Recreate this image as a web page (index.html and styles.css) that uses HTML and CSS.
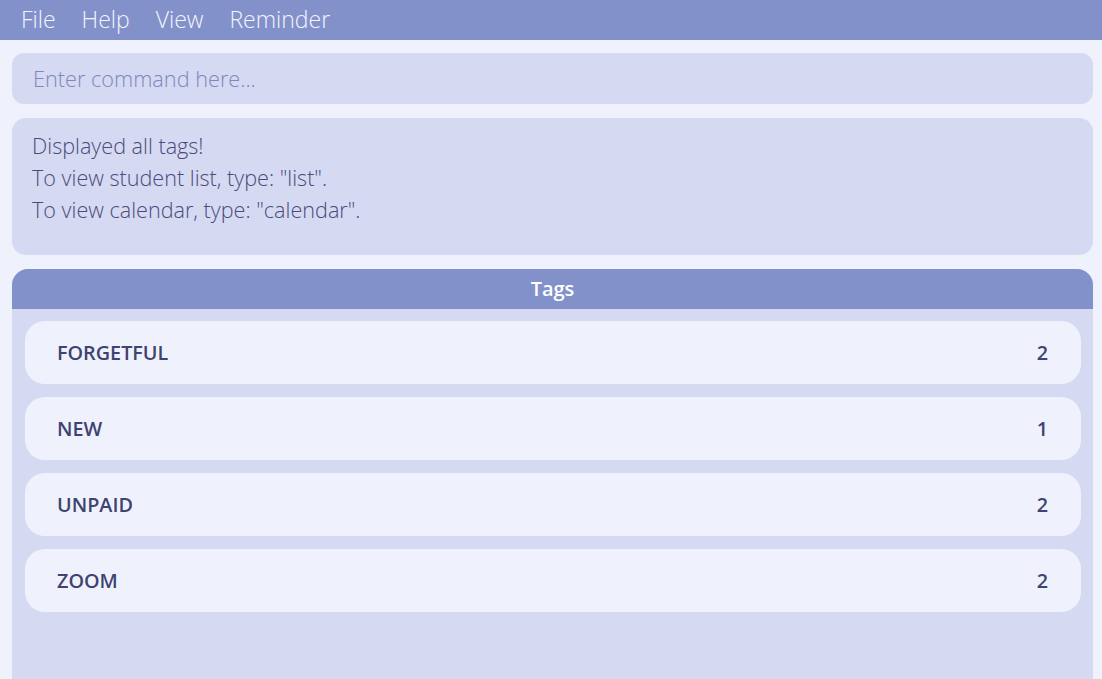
FILE: index.html
```html
<!DOCTYPE html>
<html>
<head>
<meta charset="utf-8">
<link rel="stylesheet" href="styles.css">
</head>
<body>
<nav class="menubar">
  <span class="menu-item">File</span>
  <span class="menu-item">Help</span>
  <span class="menu-item">View</span>
  <span class="menu-item">Reminder</span>
</nav>
<main class="content">
  <div class="command-box">
    <input class="command-input" type="text" placeholder="Enter command here...">
  </div>
  <div class="result-box">
    <p>Displayed all tags!</p>
    <p>To view student list, type: "list".</p>
    <p>To view calendar, type: "calendar".</p>
  </div>
  <section class="tags-panel">
    <header class="tags-header">Tags</header>
    <div class="tags-list">
      <div class="tag-row"><span class="tag-name">FORGETFUL</span><span class="tag-count">2</span></div>
      <div class="tag-row"><span class="tag-name">NEW</span><span class="tag-count">1</span></div>
      <div class="tag-row"><span class="tag-name">UNPAID</span><span class="tag-count">2</span></div>
      <div class="tag-row"><span class="tag-name">ZOOM</span><span class="tag-count">2</span></div>
    </div>
  </section>
</main>
</body>
</html>
```

FILE: styles.css
```css
* { box-sizing: border-box; }
html, body {
  margin: 0;
  height: 100%;
  overflow: hidden;
}
body {
  background: #eff2fd;
  font-family: "Open Sans", "Liberation Sans", sans-serif;
  display: flex;
  flex-direction: column;
}
.menubar {
  height: 40px;
  background: #8391cb;
  display: flex;
  align-items: center;
  padding-left: 21px;
  padding-bottom: 2px;
}
.menu-item {
  color: #f4f5fb;
  font-weight: 300;
  font-size: 23px;
  margin-right: 26px;
  line-height: 38px;
}
.content {
  flex: 1;
  display: flex;
  flex-direction: column;
  padding: 13px 9px 0 12px;
  gap: 14px;
  min-height: 0;
}
.command-box {
  height: 51px;
  background: #d5d9f2;
  border-radius: 12px;
  display: flex;
  align-items: center;
  padding-left: 21px;
}
.command-input {
  border: none;
  background: transparent;
  outline: none;
  width: 100%;
  font-family: "Open Sans", "Liberation Sans", sans-serif;
  font-weight: 300;
  font-size: 21.7px;
  color: #4a4d7e;
  padding: 0;
}
.command-input::placeholder {
  color: #7e87bf;
}
.result-box {
  height: 137px;
  background: #d5d9f2;
  border-radius: 14px;
  padding: 12px 20px;
}
.result-box p {
  margin: 0;
  font-weight: 300;
  font-size: 21.6px;
  line-height: 32px;
  color: #4b4b7b;
}
.tags-panel {
  flex: 1;
  background: #d5d9f2;
  border-radius: 16px 16px 0 0;
  display: flex;
  flex-direction: column;
  overflow: hidden;
}
.tags-header {
  height: 40px;
  background: #8391cb;
  color: #ffffff;
  font-weight: 600;
  font-size: 20px;
  display: flex;
  align-items: center;
  justify-content: center;
  padding-bottom: 2px;
}
.tags-list {
  display: flex;
  flex-direction: column;
  gap: 13px;
  padding: 12px 12px 0 13px;
}
.tag-row {
  height: 63px;
  background: #eff2fd;
  border-radius: 20px;
  display: flex;
  align-items: center;
  justify-content: space-between;
  padding: 0 33px 0 32px;
  color: #3e4370;
  font-weight: 600;
  font-size: 19.8px;
}
```
